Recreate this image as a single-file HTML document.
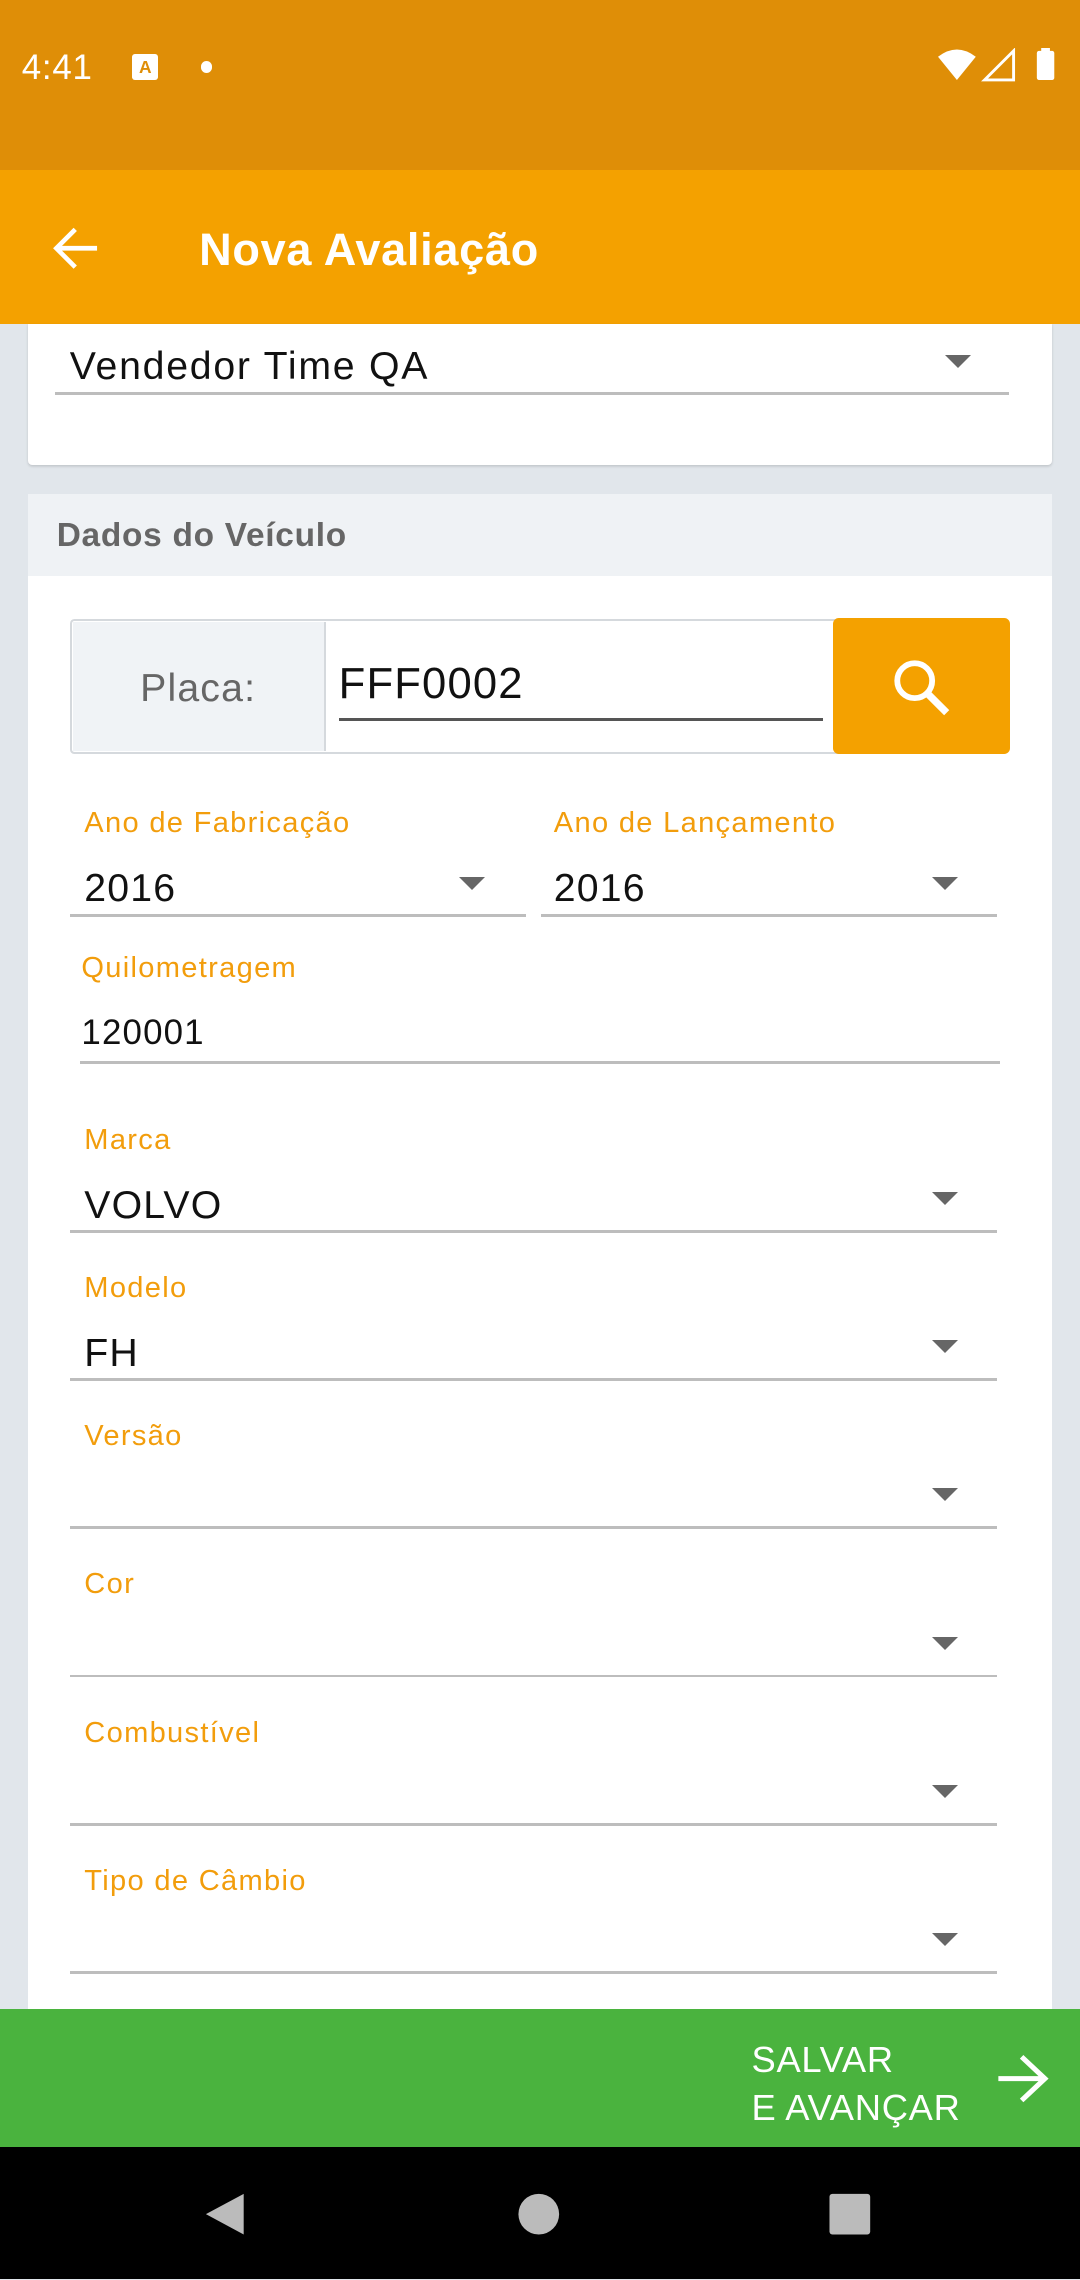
<!DOCTYPE html>
<html><head><meta charset="utf-8"><style>
*{margin:0;padding:0;box-sizing:border-box}
html,body{width:1080px;height:2280px;overflow:hidden;background:#E1E6EB}
#w{zoom:1.45357;width:743px;height:1568px;position:relative;font-family:"Liberation Sans",sans-serif;background:#E1E6EB}
.a{position:absolute}
.lbl{position:absolute;color:#F29D0C;font-size:20px;left:58px;letter-spacing:0.9px}
.val{position:absolute;color:#111;font-size:27px;left:58px;letter-spacing:0.8px}
.ul{position:absolute;height:2px;background:#BDBDBD}
.tri{position:absolute;width:0;height:0;border-left:9px solid transparent;border-right:9px solid transparent;border-top:9px solid #666}
</style></head><body><div id="w">
<div class="a" style="left:0;top:0;width:743px;height:117px;background:#DF8E07"></div>
<div class="a" style="left:15px;top:33px;color:#fff;font-size:24px;letter-spacing:0.5px">4:41</div>
<div class="a" style="left:91px;top:37px;width:18px;height:18px;background:#fff;border-radius:2px;color:#DF8E07;font-size:12px;font-weight:bold;text-align:center;line-height:18px">A</div>
<div class="a" style="left:138px;top:42px;width:8px;height:8px;background:#fff;border-radius:50%"></div>
<svg class="a" style="left:645px;top:33px" width="90" height="26"><path d="M0 6 Q13 -4 26 6 L13 22Z" fill="#fff"/><path d="M32 22 L52 2 L52 22Z" fill="none" stroke="#fff" stroke-width="2"/><rect x="68" y="2" width="12" height="20" rx="1.5" fill="#fff"/><rect x="71" y="0" width="6" height="3" fill="#fff"/></svg>
<div class="a" style="left:0;top:117px;width:743px;height:106px;background:#F4A100"></div>
<svg class="a" style="left:36px;top:155px" width="34" height="32"><path d="M3 16H31M16 3L3 16L16 29" stroke="#fff" stroke-width="3.2" fill="none"/></svg>
<div class="a" style="left:137px;top:154px;color:#fff;font-size:31px;font-weight:bold;letter-spacing:0.5px">Nova Avaliação</div>
<div class="a" style="left:19px;top:223px;width:705px;height:97px;background:#fff;border-radius:0 0 3px 3px;box-shadow:0 1px 2px rgba(0,0,0,.15)"></div>
<div class="a" style="left:48px;top:237px;font-size:27px;color:#111;letter-spacing:1.2px">Vendedor Time QA</div>
<div class="ul" style="left:38px;top:270px;width:656px"></div>
<div class="tri" style="left:650px;top:244px"></div>
<div class="a" style="left:19px;top:340px;width:705px;height:1060px;background:#fff"></div>
<div class="a" style="left:19px;top:340px;width:705px;height:56px;background:#EFF2F5"></div>
<div class="a" style="left:39px;top:356px;font-size:23px;font-weight:bold;color:#666;letter-spacing:0.5px">Dados do Veículo</div>
<div class="a" style="left:48px;top:426px;width:530px;height:93px;border:2px solid #D5D9DD;border-radius:3px 0 0 3px"></div>
<div class="a" style="left:50px;top:428px;width:174px;height:89px;background:#F0F3F6;border-right:2px solid #D5D9DD;color:#666;font-size:27px;text-align:center;line-height:92px;letter-spacing:0.8px">Placa:</div>
<div class="a" style="left:233px;top:454px;font-size:30px;color:#111;letter-spacing:0.8px">FFF0002</div>
<div class="a" style="left:233px;top:494px;width:333px;height:2px;background:#555"></div>
<div class="a" style="left:573px;top:425px;width:122px;height:94px;background:#F4A100;border-radius:4px"></div>
<svg class="a" style="left:612px;top:451px" width="44" height="44"><circle cx="17" cy="17" r="12" stroke="#fff" stroke-width="4" fill="none"/><path d="M26 26L39 39" stroke="#fff" stroke-width="5"/></svg>
<div class="lbl" style="top:555px">Ano de Fabricação</div>
<div class="lbl" style="top:555px;left:381px">Ano de Lançamento</div>
<div class="val" style="top:596px">2016</div>
<div class="val" style="top:596px;left:381px">2016</div>
<div class="ul" style="left:48px;top:629px;width:314px"></div>
<div class="ul" style="left:372px;top:629px;width:314px"></div>
<div class="tri" style="left:316px;top:603px"></div>
<div class="tri" style="left:641px;top:603px"></div>
<div class="lbl" style="top:655px;left:56px">Quilometragem</div>
<div class="val" style="top:697px;left:56px;font-size:24px">120001</div>
<div class="ul" style="left:55px;top:730px;width:633px"></div>
<div class="lbl" style="top:773px">Marca</div><div class="val" style="top:814px">VOLVO</div>
<div class="ul" style="left:48px;top:846px;width:638px"></div><div class="tri" style="left:641px;top:820px"></div>
<div class="lbl" style="top:875px">Modelo</div><div class="val" style="top:916px">FH</div>
<div class="ul" style="left:48px;top:948px;width:638px"></div><div class="tri" style="left:641px;top:922px"></div>
<div class="lbl" style="top:977px">Versão</div>
<div class="ul" style="left:48px;top:1050px;width:638px"></div><div class="tri" style="left:641px;top:1024px"></div>
<div class="lbl" style="top:1079px">Cor</div>
<div class="ul" style="left:48px;top:1152px;width:638px"></div><div class="tri" style="left:641px;top:1126px"></div>
<div class="lbl" style="top:1181px">Combustível</div>
<div class="ul" style="left:48px;top:1254px;width:638px"></div><div class="tri" style="left:641px;top:1228px"></div>
<div class="lbl" style="top:1283px">Tipo de Câmbio</div>
<div class="ul" style="left:48px;top:1356px;width:638px"></div><div class="tri" style="left:641px;top:1330px"></div>
<div class="a" style="left:0;top:1382px;width:743px;height:95px;background:#4AB33E"></div>
<div class="a" style="left:517px;top:1401px;color:#fff;font-size:25px;line-height:33px;letter-spacing:0.5px">SALVAR<br>E AVANÇAR</div>
<svg class="a" style="left:684px;top:1411px" width="40" height="38"><path d="M3 19H35M19 4L35 19L19 34" stroke="#fff" stroke-width="3.5" fill="none"/></svg>
<div class="a" style="left:0;top:1477px;width:743px;height:91px;background:#000"></div>
<svg class="a" style="left:140px;top:1505px" width="470" height="36"><path d="M28 4L28 32L2 18Z" fill="#bbb"/><circle cx="231" cy="18" r="14" fill="#bbb"/><rect x="431" y="4" width="28" height="28" rx="2" fill="#bbb"/></svg>
</div></body></html>
